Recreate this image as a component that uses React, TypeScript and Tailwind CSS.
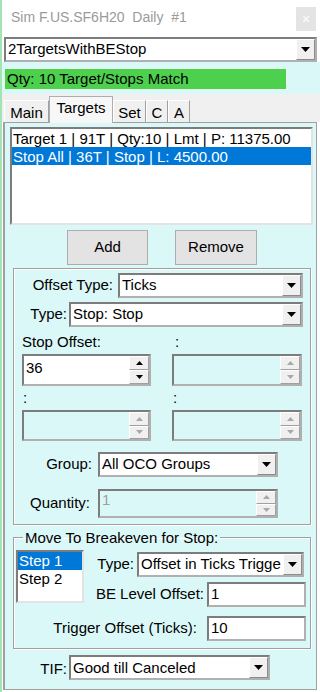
import React from 'react'

const Down = ({ color = '#000', w = 9, h = 5 }: { color?: string; w?: number; h?: number }) => (
  <svg width={w} height={h} viewBox={`0 0 ${w} ${h}`}>
    <path d={`M0 0H${w}L${w / 2} ${h}Z`} fill={color} />
  </svg>
)

const Up = ({ color = '#000' }: { color?: string }) => (
  <svg width="7" height="4" viewBox="0 0 7 4">
    <path d="M0 4H7L3.5 0Z" fill={color} />
  </svg>
)

function Combo({ className, text }: { className: string; text: string }) {
  return (
    <div
      className={`flex bg-white border-2 border-t-[#7c7c7c] border-l-[#7c7c7c] border-r-[#b0b0b0] border-b-[#b0b0b0] ${className}`}
    >
      <div className="flex-1 min-w-0 overflow-hidden whitespace-nowrap pl-[2px] flex items-center">{text}</div>
      <div className="w-[19px] shrink-0 bg-[#f0f0f0] border border-t-white border-l-white border-r-[#8c8c8c] border-b-[#8c8c8c] flex items-center justify-center">
        <Down />
      </div>
    </div>
  )
}

function Spin({ className, value = '', disabled = false, pad = 'pt-[2px]' }: { className: string; value?: string; disabled?: boolean; pad?: string }) {
  const c = disabled ? '#a8a8a8' : '#000'
  return (
    <div
      className={`flex border-2 border-t-[#7c7c7c] border-l-[#7c7c7c] border-r-[#b0b0b0] border-b-[#b0b0b0] ${disabled ? 'bg-[#dbf8f8] text-[#a0a0a0]' : 'bg-white'} ${className}`}
    >
      <div className={`flex-1 pl-[2px] leading-[17px] ${pad}`}>{value}</div>
      <div className="w-[20px] shrink-0 flex flex-col">
        <div className="flex-1 bg-[#f0f0f0] border border-t-white border-l-white border-r-[#a0a0a0] border-b-[#a0a0a0] flex items-center justify-center">
          <Up color={c} />
        </div>
        <div className="flex-1 bg-[#f0f0f0] border border-t-white border-l-white border-r-[#a0a0a0] border-b-[#a0a0a0] flex items-center justify-center">
          <Down color={c} w={7} h={4} />
        </div>
      </div>
    </div>
  )
}

function TextBox({ value }: { value: string }) {
  return (
    <div className="w-[99px] h-[25px] bg-white border-2 border-t-[#7c7c7c] border-l-[#7c7c7c] border-r-[#b0b0b0] border-b-[#b0b0b0] pl-[2px] flex items-center">
      {value}
    </div>
  )
}

const tabs = [
  { label: 'Main', w: 'w-[45px]' },
  { label: 'Targets', w: 'w-[64px]', active: true },
  { label: 'Set', w: 'w-[33px]' },
  { label: 'C', w: 'w-[22px]' },
  { label: 'A', w: 'w-[22px]' },
]

export default function App() {
  return (
    <div className="w-[320px] h-[692px] flex bg-white overflow-hidden text-[15px] text-black font-['Liberation_Sans',Arial,sans-serif]">
      <div className="w-[2px] bg-[#a4e3b4]" />
      <div className="flex-1 flex flex-col">
        {/* Title bar */}
        <div className="h-[37px] flex items-start">
          <span className="ml-[9px] mt-[9px] text-[14px] leading-[16px] text-[#9a9a9a] whitespace-pre">
            Sim F.US.SF6H20  Daily  #1
          </span>
          <div className="ml-auto mr-[4px] mt-[7px] w-[20px] h-[24px] bg-[#e4e4e4] flex items-center justify-center text-white text-[14px]">
            ×
          </div>
        </div>

        {/* Template selector */}
        <Combo className="ml-[2px] w-[313px] h-[25px]" text="2TargetsWithBEStop" />

        {/* Status */}
        <div className="h-[32px] bg-[#dbf8f8] pt-[6px] pl-[2px]">
          <div className="w-[283px] h-[22px] bg-[#4dd04d] border border-[#e8f8e8] pl-[2px] flex items-center">
            Qty: 10 Target/Stops Match
          </div>
        </div>

        {/* Tabs */}
        <div className="h-[28px] bg-[#f0f0f0] pl-[2px] flex items-end">
          {tabs.map((t) =>
            t.active ? (
              <div
                key={t.label}
                className={`${t.w} h-[27px] -mb-[1px] bg-[#f7f7f7] border border-b-0 border-[#adadad] flex justify-center pt-[2px] leading-[17px] relative z-10`}
              >
                {t.label}
              </div>
            ) : (
              <div
                key={t.label}
                className={`${t.w} h-[22px] bg-[#f0f0f0] border-l border-t border-r border-l-white border-t-white border-r-[#a0a0a0] flex justify-center pt-[3px] leading-[17px]`}
              >
                {t.label}
              </div>
            )
          )}
        </div>

        {/* Tab panel */}
        <div className="ml-[1px] mr-[3px] mb-[2px] flex-1 bg-[#dbf8f8] border border-[#a0a0a0] border-l-2 flex flex-col">
          {/* Targets list */}
          <div className="ml-[5px] mt-[4px] w-[303px] h-[98px] bg-white border-2 border-t-[#7c7c7c] border-l-[#7c7c7c] border-r-[#e3e3e3] border-b-[#e3e3e3]">
            <div className="h-[18px] pt-[1px] pl-[1px] leading-[17px] whitespace-nowrap">
              Target 1 | 91T | Qty:10 | Lmt | P: 11375.00
            </div>
            <div className="h-[18px] pt-[1px] pl-[1px] leading-[17px] whitespace-nowrap bg-[#0078d7] text-white">
              Stop All | 36T | Stop | L: 4500.00
            </div>
          </div>

          <div className="mt-[5px] flex gap-[27px] ml-[62px]">
            <button className="w-[81px] h-[35px] bg-[#e3e3e3] border border-[#adadad]">Add</button>
            <button className="w-[82px] h-[35px] bg-[#e3e3e3] border border-[#adadad]">Remove</button>
          </div>

          {/* Offset group */}
          <div className="ml-[8px] mt-[3px] w-[298px] h-[257px] border border-[#a0a0a0] shadow-[inset_1px_1px_0_#fff,1px_1px_0_#fff] flex flex-col">
            <div className="mt-[4px] flex items-center">
              <span className="w-[104px] text-right pr-[5px]">Offset Type:</span>
              <Combo className="w-[185px] h-[25px]" text="Ticks" />
            </div>
            <div className="mt-[4px] flex items-center">
              <span className="w-[55px] text-right pr-[2px]">Type:</span>
              <Combo className="w-[234px] h-[25px]" text="Stop: Stop" />
            </div>
            <div className="mt-[6px] ml-[8px] grid grid-cols-[129px_130px] gap-x-[21px] leading-[17px]">
              <span>Stop Offset:</span>
              <span className="pl-[3px]">:</span>
            </div>
            <div className="mt-[4px] ml-[8px] grid grid-cols-[129px_130px] gap-x-[21px]">
              <Spin className="h-[32px]" value="36" pad="pt-[3px]" />
              <Spin className="h-[32px]" disabled />
            </div>
            <div className="mt-[3px] ml-[8px] grid grid-cols-[129px_130px] gap-x-[21px] leading-[17px]">
              <span className="pl-[1px]">:</span>
              <span className="pl-[1px]">:</span>
            </div>
            <div className="mt-[4px] ml-[8px] grid grid-cols-[129px_130px] gap-x-[21px]">
              <Spin className="h-[31px]" disabled />
              <Spin className="h-[31px]" disabled />
            </div>
            <div className="mt-[11px] flex items-center">
              <span className="w-[84px] text-right pr-[6px]">Group:</span>
              <Combo className="w-[180px] h-[25px]" text="All OCO Groups" />
            </div>
            <div className="mt-[12px] flex items-center">
              <span className="w-[84px] text-right pr-[8px]">Quantity:</span>
              <Spin className="w-[180px] h-[29px]" value="1" disabled pad="pt-0" />
            </div>
          </div>

          {/* Breakeven group */}
          <fieldset className="ml-[8px] mt-[4px] w-[298px] h-[120px] border border-[#a0a0a0] shadow-[inset_1px_1px_0_#fff,1px_1px_0_#fff]">
            <legend className="ml-[9px] px-[2px] leading-[17px]">Move To Breakeven for Stop:</legend>
            <div className="mt-[4px] flex">
              <div className="ml-[2px] w-[68px] h-[53px] bg-white border-2 border-t-[#7c7c7c] border-l-[#7c7c7c] border-r-[#e3e3e3] border-b-[#e3e3e3]">
                <div className="h-[18px] leading-[18px] pl-[1px] bg-[#0078d7] text-white">Step 1</div>
                <div className="h-[18px] leading-[18px] pl-[1px]">Step 2</div>
              </div>
              <div className="mt-[2px] flex-1 flex flex-col">
                <div className="flex items-center justify-end gap-[3px] pr-[6px]">
                  <span>Type:</span>
                  <Combo className="w-[167px] h-[25px]" text="Offset in Ticks Trigge" />
                </div>
                <div className="mt-[5px] flex items-center justify-end gap-[3px] pr-[4px]">
                  <span>BE Level Offset:</span>
                  <TextBox value="1" />
                </div>
              </div>
            </div>
            <div className="mt-[9px] flex items-center justify-end gap-[10px] pr-[4px]">
              <span>Trigger Offset (Ticks):</span>
              <TextBox value="10" />
            </div>
          </fieldset>

          {/* TIF */}
          <div className="mt-[6px] flex items-center">
            <span className="w-[64px] text-right pr-[2px] pt-[3px]">TIF:</span>
            <Combo className="w-[201px] h-[25px]" text="Good till Canceled" />
          </div>
        </div>
      </div>
    </div>
  )
}
